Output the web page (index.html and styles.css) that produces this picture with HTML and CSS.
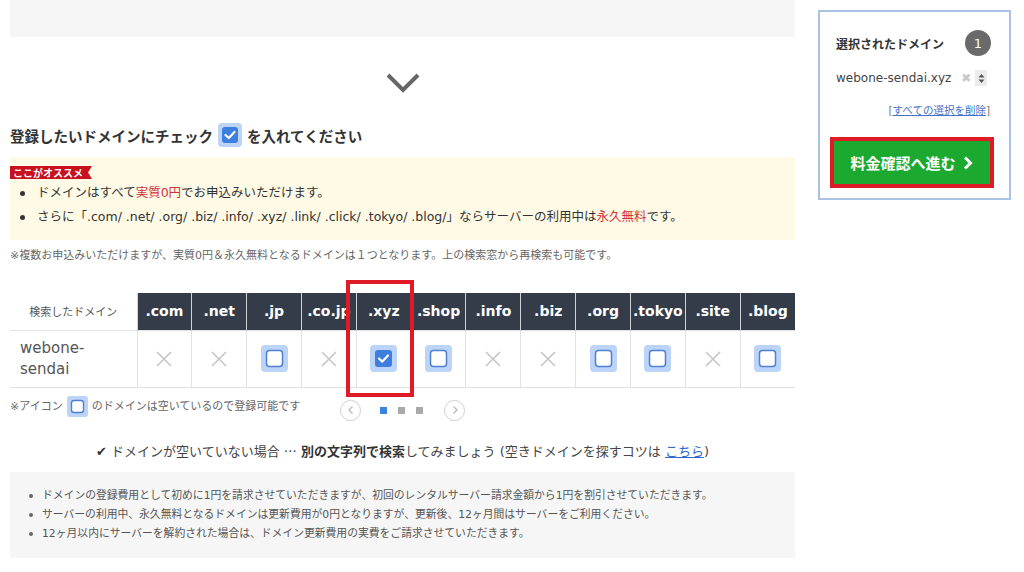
FILE: index.html
```html
<!DOCTYPE html>
<html lang="ja">
<head>
<meta charset="utf-8">
<title>ドメイン選択</title>
<link rel="stylesheet" href="styles.css">
</head>
<body>
<div class="page">
  <main class="main">
    <div class="topbox"></div>
    <div class="chev">
      <svg width="34" height="22" viewBox="0 0 34 22"><polyline points="2,3 17,18 32,3" fill="none" stroke="#666" stroke-width="4"/></svg>
    </div>
    <h2 class="heading">登録したいドメインにチェック
      <svg class="cb-head" width="24" height="24" viewBox="0 0 24 24"><rect width="24" height="24" rx="4" fill="#bcd4f7"/><rect x="4" y="4" width="16" height="16" rx="3" fill="#3d7ee0"/><polyline points="7.5,12 10.8,15 16.5,9" fill="none" stroke="#fff" stroke-width="2.2" stroke-linecap="round" stroke-linejoin="round"/></svg>
      を入れてください</h2>

    <div class="reco">
      <div class="ribbon">ここがオススメ</div>
      <ul class="reco-list">
        <li>ドメインはすべて<span class="red">実質0円</span>でお申込みいただけます。</li>
        <li>さらに「.com/ .net/ .org/ .biz/ .info/ .xyz/ .link/ .click/ .tokyo/ .blog/」ならサーバーの利用中は<span class="red">永久無料</span>です。</li>
      </ul>
    </div>

    <p class="note">※複数お申込みいただけますが、実質0円＆永久無料となるドメインは１つとなります。上の検索窓から再検索も可能です。</p>

    <div class="tablewrap">
      <table class="dtable">
        <thead>
          <tr>
            <th class="first">検索したドメイン</th>
            <th>.com</th><th>.net</th><th>.jp</th><th>.co.jp</th><th>.xyz</th><th>.shop</th>
            <th>.info</th><th>.biz</th><th>.org</th><th>.tokyo</th><th>.site</th><th>.blog</th>
          </tr>
        </thead>
        <tbody>
          <tr>
            <td class="name">webone-<wbr>sendai</td>
            <td><svg class="x" width="18" height="18" viewBox="0 0 18 18"><path d="M2 2L16 16M16 2L2 16" stroke="#c6c6c6" stroke-width="1.6"/></svg></td>
            <td><svg class="x" width="18" height="18" viewBox="0 0 18 18"><path d="M2 2L16 16M16 2L2 16" stroke="#c6c6c6" stroke-width="1.6"/></svg></td>
            <td><svg width="27" height="27" viewBox="0 0 27 27"><rect width="27" height="27" rx="4" fill="#bcd4f7"/><rect x="5.5" y="5.5" width="16" height="16" rx="3" fill="#fff" stroke="#4f80d4" stroke-width="1.5"/></svg></td>
            <td><svg class="x" width="18" height="18" viewBox="0 0 18 18"><path d="M2 2L16 16M16 2L2 16" stroke="#c6c6c6" stroke-width="1.6"/></svg></td>
            <td><svg width="27" height="27" viewBox="0 0 27 27"><rect width="27" height="27" rx="4" fill="#bcd4f7"/><rect x="5" y="5" width="17" height="17" rx="3" fill="#3d7ee0"/><polyline points="9,13.5 12.3,16.6 18,10.5" fill="none" stroke="#fff" stroke-width="2.2" stroke-linecap="round" stroke-linejoin="round"/></svg></td>
            <td><svg width="27" height="27" viewBox="0 0 27 27"><rect width="27" height="27" rx="4" fill="#bcd4f7"/><rect x="5.5" y="5.5" width="16" height="16" rx="3" fill="#fff" stroke="#4f80d4" stroke-width="1.5"/></svg></td>
            <td><svg class="x" width="18" height="18" viewBox="0 0 18 18"><path d="M2 2L16 16M16 2L2 16" stroke="#c6c6c6" stroke-width="1.6"/></svg></td>
            <td><svg class="x" width="18" height="18" viewBox="0 0 18 18"><path d="M2 2L16 16M16 2L2 16" stroke="#c6c6c6" stroke-width="1.6"/></svg></td>
            <td><svg width="27" height="27" viewBox="0 0 27 27"><rect width="27" height="27" rx="4" fill="#bcd4f7"/><rect x="5.5" y="5.5" width="16" height="16" rx="3" fill="#fff" stroke="#4f80d4" stroke-width="1.5"/></svg></td>
            <td><svg width="27" height="27" viewBox="0 0 27 27"><rect width="27" height="27" rx="4" fill="#bcd4f7"/><rect x="5.5" y="5.5" width="16" height="16" rx="3" fill="#fff" stroke="#4f80d4" stroke-width="1.5"/></svg></td>
            <td><svg class="x" width="18" height="18" viewBox="0 0 18 18"><path d="M2 2L16 16M16 2L2 16" stroke="#c6c6c6" stroke-width="1.6"/></svg></td>
            <td><svg width="27" height="27" viewBox="0 0 27 27"><rect width="27" height="27" rx="4" fill="#bcd4f7"/><rect x="5.5" y="5.5" width="16" height="16" rx="3" fill="#fff" stroke="#4f80d4" stroke-width="1.5"/></svg></td>
          </tr>
        </tbody>
      </table>
      <div class="highlight"></div>
    </div>

    <div class="under">
      <p class="legend">※アイコン
        <svg class="cb-small" width="21" height="21" viewBox="0 0 21 21"><rect width="21" height="21" rx="3" fill="#bcd4f7"/><rect x="4.5" y="4.5" width="12" height="12" rx="2.5" fill="#fff" stroke="#4f80d4" stroke-width="1.4"/></svg>
        のドメインは空いているので登録可能です</p>
      <div class="pager">
        <span class="circ"><svg width="10" height="10" viewBox="0 0 10 10"><polyline points="6.5,1.5 3,5 6.5,8.5" fill="none" stroke="#bbb" stroke-width="1.4"/></svg></span>
        <span class="dot on"></span><span class="dot"></span><span class="dot"></span>
        <span class="circ"><svg width="10" height="10" viewBox="0 0 10 10"><polyline points="3.5,1.5 7,5 3.5,8.5" fill="none" stroke="#bbb" stroke-width="1.4"/></svg></span>
      </div>
      <div></div>
    </div>

    <p class="tip"><span class="tick">✔</span> ドメインが空いていない場合 <span class="ell">…</span> <b>別の文字列で検索</b>してみましょう (空きドメインを探すコツは <a href="#">こちら</a>)</p>

    <div class="info">
      <ul>
        <li>ドメインの登録費用として初めに1円を請求させていただきますが、初回のレンタルサーバー請求金額から1円を割引させていただきます。</li>
        <li>サーバーの利用中、永久無料となるドメインは更新費用が0円となりますが、更新後、12ヶ月間はサーバーをご利用ください。</li>
        <li>12ヶ月以内にサーバーを解約された場合は、ドメイン更新費用の実費をご請求させていただきます。</li>
      </ul>
    </div>
  </main>

  <aside class="side">
    <div class="side-head"><span class="side-title">選択されたドメイン</span><span class="badge">1</span></div>
    <div class="side-item">
      <span class="side-domain">webone-sendai.xyz</span>
      <span class="side-del">✖</span>
      <span class="spin"><svg width="11" height="15" viewBox="0 0 11 15"><path d="M5.5 3L8.5 6.5H2.5Z M5.5 12L8.5 8.5H2.5Z" fill="#555"/></svg></span>
    </div>
    <div class="side-clear">[<a href="#">すべての選択を削除</a>]</div>
    <button class="go">料金確認へ進む<svg width="12" height="16" viewBox="0 0 12 16"><polyline points="3,2.5 8.5,8 3,13.5" fill="none" stroke="#fff" stroke-width="3"/></svg></button>
  </aside>
</div>
</body>
</html>
```
FILE: styles.css
```css
* { box-sizing: border-box; }

body {
  margin: 0;
  background: #fff;
  color: #333;
  font-family: "DejaVu Sans", "Noto Sans CJK JP", sans-serif;
}

.page {
  display: flex;
  align-items: flex-start;
  padding-left: 10px;
}

.main {
  width: 785px;
  flex: none;
}

.topbox {
  height: 37px;
  background: #f6f6f6;
}

.chev {
  display: flex;
  justify-content: center;
  margin-top: 35px;
  height: 22px;
}

.heading {
  margin: 28px 0 0;
  height: 26px;
  display: flex;
  align-items: center;
  gap: 5px;
  font-size: 14.5px;
  font-weight: bold;
  color: #333;
  font-family: "Noto Sans CJK JP", sans-serif;
}

.reco {
  margin-top: 9px;
  background: #fffae6;
  padding: 9px 0 11px;
}

.ribbon {
  display: block;
  width: fit-content;
  height: 13px;
  line-height: 13px;
  padding: 0 9px 0 3px;
  background: #c8101e;
  color: #fff;
  font-size: 10px;
  font-weight: bold;
  font-family: "Noto Sans CJK JP", sans-serif;
  clip-path: polygon(0 0, 100% 0, calc(100% - 4px) 50%, 100% 100%, 0 100%);
}

.reco-list {
  list-style: none;
  margin: 2px 0 0;
  padding: 0;
}

.reco-list li {
  position: relative;
  padding-left: 27px;
  line-height: 24px;
  font-size: 12.5px;
  color: #333;
}

.reco-list li::before {
  content: "";
  position: absolute;
  left: 10px;
  top: 10px;
  width: 5px;
  height: 5px;
  border-radius: 50%;
  background: #333;
}

.red { color: #d0333a; }

.note {
  margin: 8px 0 0;
  font-size: 11px;
  line-height: 16px;
  color: #666;
}

.tablewrap {
  position: relative;
  margin-top: 29px;
}

.dtable {
  width: 785px;
  table-layout: fixed;
  border-collapse: collapse;
}

.dtable th {
  height: 37px;
  padding: 0;
  background: #343c4a;
  color: #fff;
  font-size: 14px;
  font-weight: bold;
  text-align: center;
  border-left: 1px solid #cfd3d8;
  white-space: nowrap;
  overflow: hidden;
}

.dtable th.first {
  width: 127px;
  background: #fff;
  color: #555;
  font-size: 11px;
  font-weight: normal;
  border-left: none;
  font-family: "Noto Sans CJK JP", sans-serif;
}

.dtable td {
  height: 57px;
  padding: 0;
  text-align: center;
  vertical-align: middle;
  border-left: 1px solid #e2e2e2;
  border-top: 1px solid #e2e2e2;
  border-bottom: 1px solid #e2e2e2;
}

.dtable td svg { display: block; margin: 0 auto; }

.dtable td.name {
  text-align: left;
  border-left: none;
  padding: 0 14px 0 10px;
  font-size: 15px;
  line-height: 21px;
  color: #555;
}

.highlight {
  position: absolute;
  left: 336px;
  top: -13px;
  width: 68px;
  height: 117px;
  border: 4px solid #e01b27;
  pointer-events: none;
}

.under {
  display: grid;
  grid-template-columns: 1fr auto 1fr;
  align-items: start;
  margin-top: 8px;
}

.legend {
  margin: 0;
  display: flex;
  align-items: center;
  gap: 4px;
  white-space: nowrap;
  font-size: 11px;
  line-height: 21px;
  color: #666;
}

.pager {
  display: flex;
  align-items: center;
  margin-top: 4px;
}

.circ {
  width: 21px;
  height: 21px;
  border: 1.5px solid #cfcfcf;
  border-radius: 50%;
  display: flex;
  align-items: center;
  justify-content: center;
}

.dot {
  width: 7px;
  height: 7px;
  background: #aaa;
  margin-left: 11px;
}

.dot.on {
  background: #3b82e3;
  margin-left: 19px;
}

.dot + .circ { margin-left: 21px; }

.tip {
  margin: 20px 0 0;
  text-align: center;
  font-size: 13px;
  line-height: 20px;
  color: #444;
}

.tip .tick { color: #333; }

.tip .ell { font-family: "Noto Sans CJK JP", sans-serif; }

.tip b { font-weight: bold; color: #333; }

.tip a {
  color: #3366cc;
  text-decoration: underline;
}

.info {
  margin-top: 10px;
  background: #f6f6f6;
  padding: 14px 0 15px;
}

.info ul {
  list-style: none;
  margin: 0;
  padding: 0;
}

.info li {
  position: relative;
  padding-left: 32px;
  font-size: 10.8px;
  line-height: 19px;
  color: #555;
}

.info li::before {
  content: "";
  position: absolute;
  left: 19px;
  top: 8px;
  width: 4px;
  height: 4px;
  border-radius: 50%;
  background: #666;
}

.side {
  flex: none;
  width: 193px;
  height: 190px;
  margin: 10px 0 0 23px;
  border: 2px solid #a9c2e6;
  padding: 18px 18px 0 16px;
  background: #fff;
}

.side-head {
  display: flex;
  align-items: center;
  justify-content: space-between;
  height: 26px;
}

.side-title {
  font-size: 12px;
  font-weight: bold;
  color: #333;
  font-family: "Noto Sans CJK JP", sans-serif;
}

.badge {
  width: 26px;
  height: 26px;
  border-radius: 50%;
  background: #6a6a6a;
  color: #fff;
  font-size: 13px;
  display: flex;
  align-items: center;
  justify-content: center;
}

.side-item {
  display: flex;
  align-items: center;
  margin-top: 12px;
  height: 20px;
}

.side-domain {
  font-size: 12px;
  color: #444;
}

.side-del {
  margin-left: 10px;
  font-size: 12px;
  color: #c8c8c8;
}

.spin {
  margin-left: 4px;
  width: 12px;
  height: 16px;
  background: #ececec;
  display: flex;
  align-items: center;
  justify-content: center;
}

.side-clear {
  margin-top: 14px;
  text-align: right;
  font-size: 10.5px;
  line-height: 16px;
  color: #777;
  padding-right: 1px;
}

.side-clear a {
  color: #4472c4;
  text-decoration: underline;
}

.go {
  display: flex;
  align-items: center;
  justify-content: center;
  gap: 6px;
  margin: 19px 0 0 -6px;
  width: 164px;
  height: 51px;
  border: 4px solid #e01b27;
  background: #1ba92f;
  color: #fff;
  font-size: 15px;
  font-weight: bold;
  font-family: "Noto Sans CJK JP", sans-serif;
  padding: 0;
}
```
